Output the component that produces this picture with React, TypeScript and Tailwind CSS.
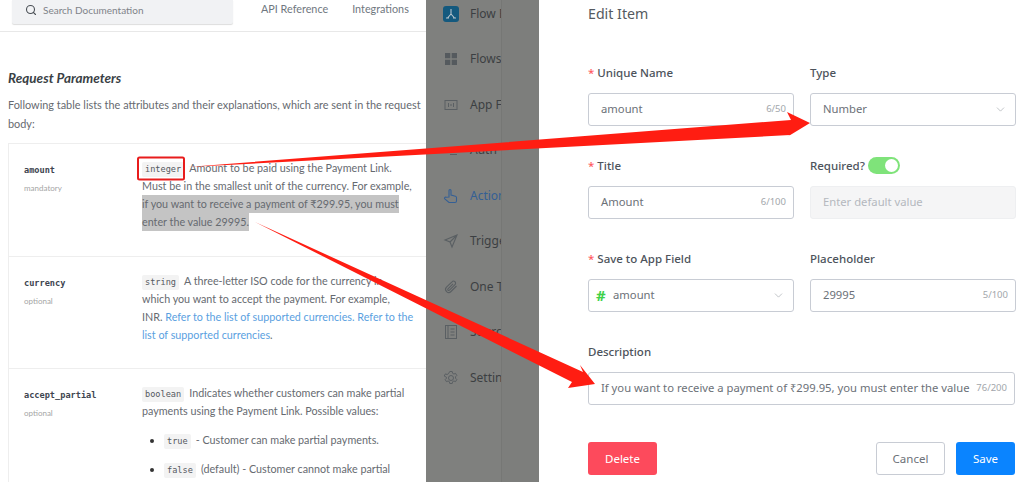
import { ChevronDown, Search } from "lucide-react";
import type { ReactNode } from "react";

const docFont = "font-['Lato',sans-serif]";
const formFont = "font-['Noto_Sans',sans-serif]";
const monoFont = "font-['DejaVu_Sans_Mono',monospace]";

function Code({ children }: { children: ReactNode }) {
  return (
    <code className={`${monoFont} inline-block h-[15px] rounded-[2px] bg-[#f3f3f3] px-[3px] align-middle text-[8.6px] leading-[15px] text-[#55595f]`}>
      {children}
    </code>
  );
}

function Line({ children }: { children: ReactNode }) {
  return <div className="h-[18px] whitespace-nowrap">{children}</div>;
}

function ParamRow({
  children,
  hint,
  name,
  rowClass
}: {
  children: ReactNode;
  hint: string;
  name: string;
  rowClass: string;
}) {
  return (
    <div className={`flex border-b border-[#eeeeee] pl-[15px] pt-[20px] ${rowClass}`}>
      <div className="w-[118px] shrink-0">
        <p className={`${monoFont} text-[8.6px] font-bold leading-[12px] text-[#3e4550]`}>{name}</p>
        <p className="mt-[7px] text-[8px] leading-[11px] text-[#a5a5a5]">{hint}</p>
      </div>
      <div className="-mt-[5px] w-[270px] text-[10.750px] leading-[18px] text-[#666a70]">{children}</div>
    </div>
  );
}

function DocPane() {
  return (
    <section className={`${docFont} h-full w-[426px] shrink-0 overflow-hidden bg-white`}>
      <header className="flex h-[32px] items-start border-b border-[#e8e8e8]">
        <div className="ml-[12px] flex h-[24px] w-[221px] items-center rounded-b-[2px] bg-[#f1f2f4] pb-[4px] pl-[13px] shadow-[0_1px_1px_#dddddd]">
          <Search className="size-[12px] text-[#4a4f55]" strokeWidth={2.2} />
          <span className="ml-[6px] text-[10px] text-[#7f8389]">Search Documentation</span>
        </div>
        <span className="ml-[28px] mt-[1px] text-[10.800px] leading-[16px] text-[#6f7780]">API Reference</span>
        <span className="ml-[24px] mt-[1px] text-[10.800px] leading-[16px] text-[#6f7780]">Integrations</span>
      </header>
      <h2 className="ml-[8px] mt-[37px] text-[13.5px] font-bold italic leading-[18px] text-[#3a3f45]">
        Request Parameters
      </h2>
      <div className="ml-[8px] mt-[9px] whitespace-nowrap text-[10.900px] leading-[18.5px] text-[#666a70]">
        <p>Following table lists the attributes and their explanations, which are sent in the request</p>
        <p>body:</p>
      </div>
      <div className="ml-[8px] mt-[10px] border-l border-t border-[#eeeeee]">
        <ParamRow hint="mandatory" name="amount" rowClass="h-[113px]">
          <Line>
            <Code>integer</Code>
            <span className="ml-[5px]">Amount to be paid using the Payment Link.</span>
          </Line>
          <Line>Must be in the smallest unit of the currency. For example,</Line>
          <div className="h-[18px] w-fit whitespace-nowrap bg-[#c4c4c4]">if you want to receive a payment of ₹299.95, you must</div>
          <div className="h-[18px] w-fit whitespace-nowrap bg-[#c4c4c4]">enter the value 29995.</div>
        </ParamRow>
        <ParamRow hint="optional" name="currency" rowClass="h-[112px]">
          <Line>
            <Code>string</Code>
            <span className="ml-[5px]">A three-letter ISO code for the currency in</span>
          </Line>
          <Line>which you want to accept the payment. For example,</Line>
          <Line>
            INR. <span className="text-[#5a9fdf]">Refer to the list of supported currencies. Refer to the</span>
          </Line>
          <Line>
            <span className="text-[#5a9fdf]">list of supported currencies</span>.
          </Line>
        </ParamRow>
        <ParamRow hint="optional" name="accept_partial" rowClass="h-[120px]">
          <Line>
            <Code>boolean</Code>
            <span className="ml-[5px]">Indicates whether customers can make partial</span>
          </Line>
          <Line>payments using the Payment Link. Possible values:</Line>
          <ul className="mt-[11px] list-disc whitespace-nowrap pl-[22px] marker:text-[#333333]">
            <li className="mb-[11px] h-[18px]">
              <Code>true</Code>
              <span className="ml-[5px]">- Customer can make partial payments.</span>
            </li>
            <li className="h-[18px]">
              <Code>false</Code>
              <span className="ml-[5px]">(default) - Customer cannot make partial</span>
            </li>
          </ul>
        </ParamRow>
      </div>
    </section>
  );
}

const navItems: { icon: ReactNode; label: string; active?: boolean }[] = [
  {
    label: "Flow Editor",
    icon: (
      <svg className="size-[16px]" viewBox="0 0 16 16">
        <rect fill="#14597e" height="16" rx="3" width="16" />
        <path d="M8 3v5M8 8 4.500 12M8 8l3.500 4M3 12h3M10 12h3" fill="none" stroke="#b6c4cc" strokeWidth="1.100" />
      </svg>
    )
  },
  {
    label: "Flows",
    icon: (
      <svg className="size-[16px]" viewBox="0 0 16 16">
        <path d="M2 2h5.300v5.300H2zM8.700 2H14v5.300H8.700zM2 8.700h5.300V14H2zM8.700 8.700H14V14H8.700z" fill="#555a5e" />
      </svg>
    )
  },
  {
    label: "App Fields",
    icon: (
      <svg className="size-[16px]" fill="none" stroke="#5a5f63" viewBox="0 0 16 16">
        <rect height="9" width="12" x="2" y="3.500" />
        <path d="M5.500 6v4M10.500 6v4M7 8h2" />
      </svg>
    )
  },
  {
    label: "Auth",
    icon: (
      <svg className="size-[16px]" fill="none" stroke="#5a5f63" viewBox="0 0 16 16">
        <path d="M2 5 5 8l-3 3M7 12.500h7" />
      </svg>
    )
  },
  {
    active: true,
    label: "Actions",
    icon: (
      <svg className="size-[16px]" fill="none" stroke="#345f95" strokeWidth="1.100" viewBox="0 0 16 16">
        <path d="M6 9V2.500a1 1 0 0 1 2 0V7l4.500 1.200c.7.2 1 .7 1 1.300V13a1.500 1.500 0 0 1-1.500 1.500H6L1.800 10.800c-.8-.9.200-2 1.200-1.500z" />
      </svg>
    )
  },
  {
    label: "Triggers",
    icon: (
      <svg className="size-[16px]" fill="none" stroke="#5a5f63" strokeWidth="1.100" viewBox="0 0 16 16">
        <path d="M14 2 2 7l5 2 2 5zM7 9l7-7" />
      </svg>
    )
  },
  {
    label: "One Tap",
    icon: (
      <svg className="size-[16px]" fill="none" stroke="#5a5f63" strokeWidth="1.100" viewBox="0 0 16 16">
        <path d="M13.500 7 8 12.500a3 3 0 0 1-4.500-4.300L9 2.800a2 2 0 0 1 3 2.900l-5.500 5.500a1 1 0 0 1-1.500-1.400l5-5" />
      </svg>
    )
  },
  {
    label: "Source",
    icon: (
      <svg className="size-[16px]" fill="none" stroke="#5a5f63" viewBox="0 0 16 16">
        <rect height="13" width="11" x="2.500" y="1.500" />
        <path d="M5 1.500v13M7.500 5h4M7.500 8h4M7.500 11h4" />
      </svg>
    )
  },
  {
    label: "Settings",
    icon: (
      <svg className="size-[16px]" fill="none" stroke="#5a5f63" viewBox="0 0 16 16">
        <circle cx="8" cy="8" r="2.500" />
        <path d="M6.800 1.500h2.400l.4 1.800 1.300.7 1.700-.6 1.200 2.100-1.300 1.300v1.400l1.300 1.300-1.200 2.100-1.700-.6-1.300.7-.4 1.800H6.800l-.4-1.800-1.300-.7-1.700.6-1.200-2.100 1.300-1.300V7.300L1.200 6l1.200-2.100 1.700.6 1.300-.7z" />
      </svg>
    )
  }
];

function NavPane() {
  return (
    <aside className={`${formFont} flex h-full w-[113px] shrink-0 overflow-hidden bg-[#7f807e]`}>
      <nav className="-mt-[9px] w-[75px] shrink-0 overflow-hidden pl-[17px]">
        {navItems.map((item) => (
          <div className="flex h-[45.500px] items-center whitespace-nowrap" key={item.label}>
            <span className="w-[27px] shrink-0">{item.icon}</span>
            <span className={`text-[12px] ${item.active ? "text-[#345f95]" : "text-[#3c3f42]"}`}>{item.label}</span>
          </div>
        ))}
      </nav>
      <div className="flex-1 border-l border-[#767775] bg-[#7d7e7c]" />
    </aside>
  );
}

function FieldLabel({ children, required }: { children: ReactNode; required?: boolean }) {
  return (
    <label className="flex h-[17px] items-center text-[11.500px] font-medium text-[#4d535b]">
      {required ? <span className="mr-[3px] text-[#ff5a5f]">*</span> : null}
      {children}
    </label>
  );
}

function Field({
  children,
  count,
  disabled
}: {
  children: ReactNode;
  count?: string;
  disabled?: boolean;
}) {
  return (
    <div
      className={`mt-[12px] flex h-[33px] items-center rounded-[3px] border text-[11.250px] ${
        disabled ? "border-[#eeeff1] bg-[#f5f5f6] text-[#b4b8be]" : "border-[#c8ccd4] bg-white text-[#6c7178]"
      }`}
    >
      {children}
      {count ? <span className="ml-auto pr-[7px] text-[9.500px] text-[#a2a6ab]">{count}</span> : null}
    </div>
  );
}

function FormPane() {
  return (
    <section className={`${formFont} flex h-full min-w-0 flex-1 flex-col bg-white pl-[49px] pr-[9px]`}>
      <h1 className="mt-[4px] text-[14.200px] leading-[19px] text-[#555a60]">Edit Item</h1>
      <div className="mt-[41px] grid grid-cols-[206px_206px] gap-x-[16px]">
        <div className="h-[93px]">
          <FieldLabel required>Unique Name</FieldLabel>
          <Field count="6/50">
            <span className="pl-[12px]">amount</span>
          </Field>
        </div>
        <div className="h-[93px]">
          <FieldLabel>Type</FieldLabel>
          <Field>
            <span className="pl-[12px]">Number</span>
            <ChevronDown className="ml-auto mr-[8px] size-[13px] text-[#a8acb2]" strokeWidth={1.300} />
          </Field>
        </div>
        <div className="h-[93px]">
          <FieldLabel required>Title</FieldLabel>
          <Field count="6/100">
            <span className="pl-[12px]">Amount</span>
          </Field>
        </div>
        <div className="h-[93px]">
          <div className="flex items-center">
            <FieldLabel>Required?</FieldLabel>
            <span className="ml-[3px] flex h-[17px] w-[32px] items-center justify-end rounded-full bg-[#7fe37a] pr-[2px]">
              <span className="size-[13px] rounded-full bg-white" />
            </span>
          </div>
          <Field disabled>
            <span className="pl-[12px]">Enter default value</span>
          </Field>
        </div>
        <div className="h-[93px]">
          <FieldLabel required>Save to App Field</FieldLabel>
          <Field>
            <span className="w-[24px] pl-[7px] text-[15px] font-bold leading-none text-[#3fd14a]">#</span>
            <span>amount</span>
            <ChevronDown className="ml-auto mr-[8px] size-[13px] text-[#a8acb2]" strokeWidth={1.300} />
          </Field>
        </div>
        <div className="h-[93px]">
          <FieldLabel>Placeholder</FieldLabel>
          <Field count="5/100">
            <span className="pl-[12px]">29995</span>
          </Field>
        </div>
      </div>
      <FieldLabel>Description</FieldLabel>
      <Field count="76/200">
        <span className="whitespace-nowrap pl-[12px]">If you want to receive a payment of ₹299.95, you must enter the value</span>
      </Field>
      <div className="mt-[37px] flex text-[11.500px]">
        <button className="h-[33px] w-[69px] rounded-[3px] bg-[#fd4a5c] text-white">Delete</button>
        <button className="ml-auto h-[33px] w-[69px] rounded-[3px] border border-[#c8ccd4] bg-white text-[#6c7178]">Cancel</button>
        <button className="ml-[11px] h-[33px] w-[59px] rounded-[3px] bg-[#0a84ff] text-white">Save</button>
      </div>
    </section>
  );
}

function Annotations() {
  return (
    <svg className="pointer-events-none absolute inset-0" height="482" viewBox="0 0 1024 482" width="1024">
      <rect fill="none" height="22" rx="1.500" stroke="#e81c1c" strokeWidth="2" width="46" x="138" y="157.500" />
      <polygon fill="#ff1d12" points="188,167 791,120 787,112 810,123 787,137 790,135" />
      <polygon fill="#ff1d12" points="255,222 583,372 580,365 595,384 568,388 572,382" />
    </svg>
  );
}

export default function App() {
  return (
    <div className="relative flex h-[482px] w-[1024px] overflow-hidden bg-white">
      <DocPane />
      <NavPane />
      <FormPane />
      <Annotations />
    </div>
  );
}
